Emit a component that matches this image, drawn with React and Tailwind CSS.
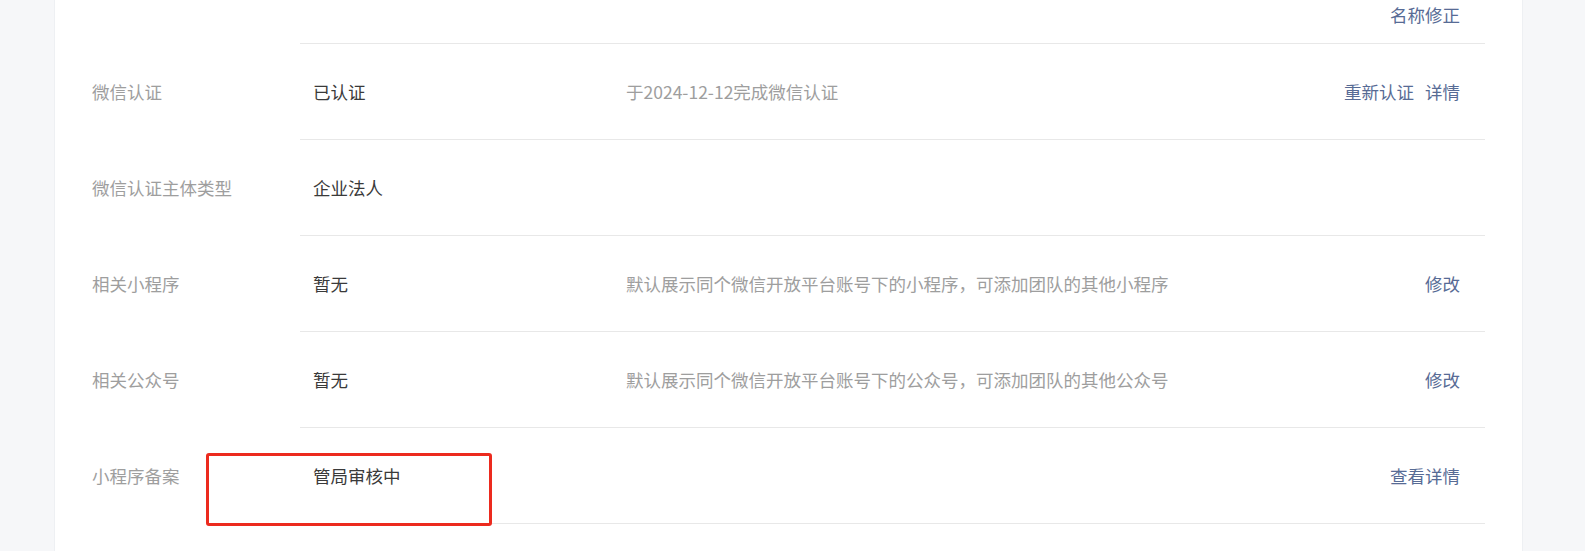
const rows = [
  {
    label: '微信认证',
    value: '已认证',
    desc: '于2024-12-12完成微信认证',
    actions: ['重新认证', '详情'],
  },
  { label: '微信认证主体类型', value: '企业法人', desc: '', actions: [] },
  {
    label: '相关小程序',
    value: '暂无',
    desc: '默认展示同个微信开放平台账号下的小程序，可添加团队的其他小程序',
    actions: ['修改'],
  },
  {
    label: '相关公众号',
    value: '暂无',
    desc: '默认展示同个微信开放平台账号下的公众号，可添加团队的其他公众号',
    actions: ['修改'],
  },
  { label: '小程序备案', value: '管局审核中', desc: '', actions: ['查看详情'], marked: true },
]

function Actions({ items }) {
  return (
    <div className="flex items-center gap-[11px] pr-[25px]">
      {items.map((a) => (
        <a key={a} className="text-[#576b95] cursor-pointer">
          {a}
        </a>
      ))}
    </div>
  )
}

function InfoRow({ row }) {
  return (
    <div className="flex h-[96px]">
      <div className="w-[208px] shrink-0 flex items-center text-[#9e9e9e]">{row.label}</div>
      <div className="flex-1 flex items-center border-b border-[#e8e8e8] relative">
        <div className="w-[326px] shrink-0 pl-[13px] text-[#3a3a3a]">{row.value}</div>
        <div className="flex-1 text-[#9e9e9e]">{row.desc}</div>
        <Actions items={row.actions} />
        {/* red annotation box around the filing status */}
        {row.marked && (
          <div className="absolute left-[-94px] top-[25px] w-[286px] h-[73px] border-[3px] border-[#ec2a1e] rounded-[3px] pointer-events-none" />
        )}
      </div>
    </div>
  )
}

export default function App() {
  return (
    <div
      className="h-[551px] w-[1585px] bg-[#f6f7f9] overflow-hidden text-[17.5px] leading-[24px]"
      style={{ fontFamily: '"Noto Sans CJK SC", "Noto Sans", sans-serif' }}
    >
      <div className="ml-[54px] w-[1469px] h-full bg-white border-l border-r border-[#eef0f3] pl-[37px] pr-[37px]">
        {/* top row, partly scrolled off */}
        <div className="flex h-[44px]">
          <div className="w-[208px] shrink-0" />
          <div className="flex-1 flex items-start justify-end pt-[3px] border-b border-[#e8e8e8]">
            <Actions items={['名称修正']} />
          </div>
        </div>
        {rows.map((r) => (
          <InfoRow key={r.label} row={r} />
        ))}
      </div>
    </div>
  )
}
